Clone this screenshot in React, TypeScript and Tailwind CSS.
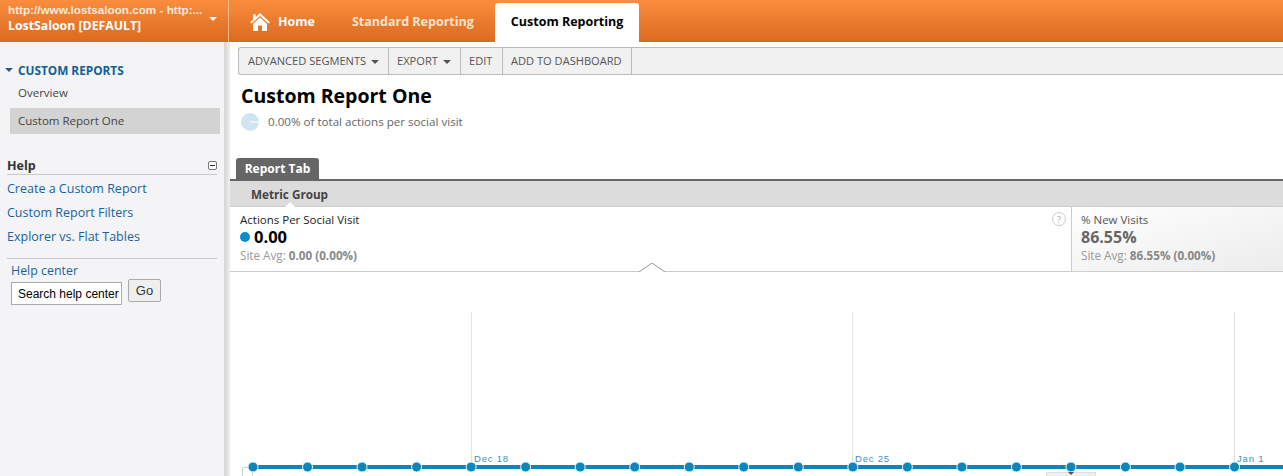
const sans = "font-['Open_Sans','Noto_Sans',sans-serif]";

const helpLinks = ["Create a Custom Report", "Custom Report Filters", "Explorer vs. Flat Tables"];

function Caret({ className }: { className: string }) {
  return <span className={`inline-block h-0 w-0 border-x-[4px] border-t-[4px] border-x-transparent ${className}`} />;
}

function TopBar() {
  return (
    <div className="flex h-[42px] shrink-0 bg-gradient-to-b from-[#f98d3d] to-[#db6a1e]">
      <div className="flex w-[229px] shrink-0 items-start justify-between border-r border-[#f6b98a] pl-2 pr-[11px] pt-[2px] text-white">
        <div>
          <div className="font-['Liberation_Sans',sans-serif] text-[11.7px] font-bold leading-[16px] text-[#fde9d8]">
            http://www.lostsaloon.com - http:...
          </div>
          <div className="text-[12.3px] font-bold leading-[16px]">LostSaloon [DEFAULT]</div>
        </div>
        <Caret className="mt-[15px] border-t-white" />
      </div>
      <nav className="flex flex-1 items-start text-[12.5px] font-bold">
        <a className="flex h-[42px] items-center gap-[8px] pb-px pl-[21px] pr-[37px] pt-[3px] text-white">
          <svg viewBox="0 0 20 18" className="h-[18px] w-[20px] fill-white">
            <path d="M10 0 L20 9.2 L18.4 10.6 L10 3 L1.6 10.6 L0 9.2 L3.2 6.3 V1.2 H5.8 V3.9 Z" />
            <path d="M10 4.6 L17 10.9 V18 H12 V12.5 H8 V18 H3 V10.9 Z" />
          </svg>
          Home
        </a>
        <a className="flex h-[42px] items-center pt-[3px] text-[#fde3cc]">Standard Reporting</a>
        <a className="ml-[21px] mt-[3px] flex h-[39px] items-center rounded-t-[3px] bg-white px-[16px] text-black">
          Custom Reporting
        </a>
      </nav>
    </div>
  );
}

function Sidebar() {
  return (
    <aside className="flex w-[224px] shrink-0 flex-col bg-[#f4f4f6] pt-[20px] text-[12px]">
      <div className="flex items-center pl-[5px] text-[#0f5f9a]">
        <Caret className="mr-[5px] border-t-[#31587a]" />
        <span className="text-[11.8px] font-bold leading-[16px]">CUSTOM REPORTS</span>
      </div>
      <div className="mt-[6px] pl-[18px] text-[11.5px] leading-[18px] text-[#444]">Overview</div>
      <div className="ml-[10px] mr-[4px] mt-[6px] h-[26px] bg-[#d3d3d3] pl-[8px] text-[11.5px] leading-[25px] text-[#444]">
        Custom Report One
      </div>
      <div className="mx-[7px] mt-[23px] flex h-[18px] items-center justify-between border-b border-[#c9c9cc]">
        <span className="text-[12.5px] font-bold leading-[16px] text-[#333]">Help</span>
        <span className="flex h-[9px] w-[9px] items-center justify-center rounded-[2px] border border-[#777] bg-white">
          <span className="h-px w-[5px] bg-[#333]" />
        </span>
      </div>
      <ul className="mx-[7px] border-b border-[#c9c9cc] pb-[9px] pt-[2px] text-[12.5px] text-[#17639e]">
        {helpLinks.map((l) => (
          <li key={l} className="h-[24px] leading-[24px]">{l}</li>
        ))}
      </ul>
      <div className="ml-[11px] mt-[3px] text-[12.4px] leading-[18px] text-[#17639e]">Help center</div>
      <div className="ml-[11px] mt-[2px] flex items-start gap-[6px]">
        <input
          readOnly
          value="Search help center"
          className="h-[23px] w-[111px] border border-[#aaa] bg-white pl-[6px] font-['Liberation_Sans',sans-serif] text-[12px] text-black outline-none"
        />
        <button className="-mt-[3px] h-[23px] w-[33px] rounded-[2px] border border-[#aaa] bg-[#efefef] font-['Liberation_Sans',sans-serif] text-[13px] leading-[19px] text-[#333]">
          Go
        </button>
      </div>
    </aside>
  );
}

function Toolbar() {
  const items = [
    { label: "ADVANCED SEGMENTS", w: "w-[150px] pl-[9px]", menu: true },
    { label: "EXPORT", w: "w-[72px] pl-[8px]", menu: true },
    { label: "EDIT", w: "w-[42px] pl-[8px]", menu: false },
    { label: "ADD TO DASHBOARD", w: "w-[129px] pl-[8px]", menu: false },
  ];
  return (
    <div className="ml-[8px] mt-[5px] flex h-[28px] rounded-l-[3px] border-y border-l border-[#bbb] bg-[#f1f1f1] text-[11.1px] text-[#555]">
      {items.map((it) => (
        <div key={it.label} className={`flex items-center gap-[5px] whitespace-nowrap border-r border-[#bbb] ${it.w}`}>
          {it.label}
          {it.menu && <Caret className="mt-[2px] border-t-[#555]" />}
        </div>
      ))}
    </div>
  );
}

function MetricRow() {
  return (
    <div className="relative flex h-[65px] border-b border-[#ccc] text-[11.5px]">
      <div className="relative w-[841px] shrink-0 pl-[10px] pt-[4px]">
        <div className="leading-[17px] text-[#222]">Actions Per Social Visit</div>
        <div className="flex items-center text-[16.5px] font-bold leading-[18px] text-black">
          <span className="mr-[4px] h-[10px] w-[10px] rounded-full bg-[#0a8ccf]" />
          0.00
        </div>
        <div className="mt-[1px] text-[11.7px] leading-[17px] text-[#999]">
          Site Avg: <b className="text-[#888]">0.00 (0.00%)</b>
        </div>
        <span className="absolute right-[5px] top-[5px] flex h-[14px] w-[14px] items-center justify-center rounded-full border border-[#ccc] text-[9px] leading-none text-[#aaa]">
          ?
        </span>
      </div>
      <div className="flex-1 border-l border-[#ccc] bg-gradient-to-br from-white to-[#ececec] pl-[9px] pt-[4px]">
        <div className="leading-[17px] text-[#555]">% New Visits</div>
        <div className="text-[16px] font-bold leading-[18px] text-[#666]">86.55%</div>
        <div className="mt-[1px] text-[11.7px] leading-[17px] text-[#999]">
          Site Avg: <b className="text-[#888]">86.55% (0.00%)</b>
        </div>
      </div>
      <svg viewBox="0 0 26 9" className="absolute left-[409px] top-[56px] h-[9px] w-[26px]">
        <path d="M0 9 L13 0 L26 9" className="fill-white stroke-[#999]" strokeWidth="1" />
      </svg>
    </div>
  );
}

function Chart() {
  const points = Array.from({ length: 20 }, (_, i) => 23 + i * 54.53);
  const ticks = [
    { x: 241, label: "Dec 18" },
    { x: 622, label: "Dec 25" },
    { x: 1004, label: "Jan 1" },
  ];
  return (
    <div className="relative flex-1">
      <svg width="1053" height="204" viewBox="0 0 1053 204" className="block">
        <rect x="12.5" y="195.5" width="10" height="9" rx="1" fill="#fff" stroke="#ccc" />
        {ticks.map((t) => (
          <g key={t.label}>
            <line x1={t.x + 0.5} x2={t.x + 0.5} y1="40" y2="195" stroke="#e2e2e2" />
            <text x={t.x + 3} y="190" fontSize="9.5" letterSpacing="0.8" fill="#3a8fc4" fontFamily="Liberation Sans, sans-serif">
              {t.label}
            </text>
          </g>
        ))}
        <line x1="23" x2="1053" y1="195" y2="195" stroke="#0a86bd" strokeWidth="4" />
        {points.map((x) => (
          <circle key={x} cx={x} cy="195" r="5" fill="#0a86bd" stroke="#e8f4fa" strokeWidth="1" />
        ))}
        <rect x="816.5" y="200.5" width="49" height="6" fill="#efefef" stroke="#ddd" />
        <path d="M838 200 h6 l-3 3 z" fill="#555" />
      </svg>
    </div>
  );
}

export default function App() {
  return (
    <div className={`flex h-[476px] w-full flex-col overflow-hidden bg-white ${sans}`}>
      <TopBar />
      <div className="flex min-h-0 flex-1">
        <Sidebar />
        <div className="w-[6px] shrink-0 bg-gradient-to-r from-[#d4d4d4] to-[#efefef]" />
        <main className="flex min-w-0 flex-1 flex-col">
          <Toolbar />
          <h1 className="ml-[11px] mt-[7px] text-[19.5px] font-bold leading-[28px] text-black">Custom Report One</h1>
          <div className="ml-[11px] mt-[3px] flex h-[18px] items-center gap-[9px] text-[11.6px] text-[#666]">
            <svg viewBox="0 0 18 18" className="h-[18px] w-[18px]">
              <circle cx="9" cy="9" r="9" fill="#cde6f2" />
              <line x1="9" y1="9" x2="18" y2="9" stroke="#fff" />
            </svg>
            0.00% of total actions per social visit
          </div>
          <div className="ml-[6px] mt-[27px] flex h-[21px] w-[83px] items-center justify-center rounded-t-[3px] bg-[#666] text-[12px] font-bold text-white">
            Report Tab
          </div>
          <div className="h-[2px] bg-[#666]" />
          <div className="relative h-[26px] border-b border-[#ccc] bg-[#dcdcdc] pl-[21px] text-[11.7px] font-bold leading-[26px] text-[#444]">
            Metric Group
            <svg viewBox="0 0 10 5" className="absolute bottom-[-1px] left-[55px] h-[5px] w-[10px]">
              <path d="M0 5 L5 0 L10 5 Z" fill="#fff" />
            </svg>
          </div>
          <MetricRow />
          <Chart />
        </main>
      </div>
    </div>
  );
}
